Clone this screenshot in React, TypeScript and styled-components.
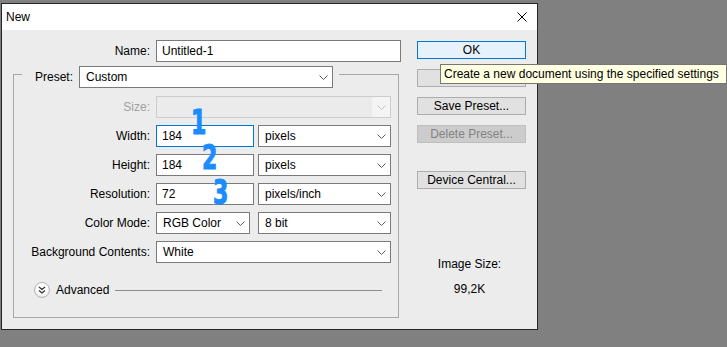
import React from 'react';
import styled, { createGlobalStyle, css } from 'styled-components';

const GlobalStyle = createGlobalStyle`
  html, body {
    margin: 0;
    padding: 0;
    background: #808080;
  }
  body {
    font-family: "Liberation Sans", Arial, sans-serif;
    font-size: 12px;
    color: #000;
  }
`;

const Page = styled.div`
  min-height: 347px;
  padding: 3px 0 0 1px;
  box-sizing: border-box;
  position: relative;
`;

const Dialog = styled.div`
  position: relative;
  width: 537px;
  height: 327px;
  box-sizing: border-box;
  border: 1px solid #262626;
  background: #ececec;
  display: flex;
  flex-direction: column;
`;

const TitleBar = styled.div`
  height: 26px;
  background: #fff;
  display: flex;
  align-items: center;
  justify-content: space-between;
  padding: 0 10px 0 4px;
`;

const Title = styled.span`
  font-size: 12px;
`;

const Body = styled.div`
  flex: 1;
  display: flex;
`;

const LeftCol = styled.div`
  width: 397px;
  padding-top: 10px;
  display: flex;
  flex-direction: column;
`;

const NameRow = styled.div`
  display: grid;
  grid-template-columns: 148px 245px;
  column-gap: 6px;
  align-items: center;
`;

const Label = styled.span<{ $disabled?: boolean }>`
  text-align: right;
  white-space: nowrap;
  color: ${p => (p.$disabled ? '#a0a0a0' : '#000')};
`;

const TextInput = styled.div<{ $w?: number; $focused?: boolean }>`
  width: ${p => (p.$w ? `${p.$w}px` : 'auto')};
  height: 22px;
  box-sizing: border-box;
  background: #fff;
  border: 1px solid ${p => (p.$focused ? '#0078d7' : '#7a7a7a')};
  padding-left: 5px;
  display: flex;
  align-items: center;
`;

const GroupBox = styled.div`
  margin: 12px 0 0 11px;
  width: 386px;
  height: 244px;
  box-sizing: border-box;
  border: 1px solid #a7a7a7;
  display: flex;
  flex-direction: column;
`;

const GroupHeader = styled.div`
  margin: -9px 0 0 8px;
  align-self: flex-start;
  display: flex;
  align-items: center;
  gap: 6px;
  padding: 0 6px 0 13px;
  background: #ececec;
`;

const Rows = styled.div`
  margin-top: 8px;
  display: flex;
  flex-direction: column;
  gap: 7px;
`;

const Row = styled.div`
  display: flex;
  align-items: center;
`;

const RowLabel = styled(Label)`
  width: 136px;
  margin-right: 6px;
`;

const SelectBox = styled.div<{ $w: number; $disabled?: boolean; $ml?: number }>`
  width: ${p => p.$w}px;
  height: 22px;
  margin-left: ${p => p.$ml ?? 0}px;
  box-sizing: border-box;
  border: 1px solid #7a7a7a;
  background: #fff;
  display: flex;
  align-items: center;
  justify-content: space-between;
  padding: 0 0 0 6px;
  ${p =>
    p.$disabled &&
    css`
      border-color: #cdcdcd;
      background: linear-gradient(to right, #ebebeb calc(100% - 18px), #f4f4f4 calc(100% - 18px));
    `}
`;

const ChevronWrap = styled.span`
  width: 18px;
  display: flex;
  justify-content: center;
`;

const Chevron = ({ disabled }: { disabled?: boolean }) => (
  <ChevronWrap>
    <svg width="9" height="5" viewBox="0 0 9 5">
      <path d="M0.5 0.5 L4.5 4.5 L8.5 0.5" fill="none" stroke={disabled ? '#c2c2c2' : '#5a5a5a'} strokeWidth="1" />
    </svg>
  </ChevronWrap>
);

const Select = ({ w, value, disabled, ml }: { w: number; value?: string; disabled?: boolean; ml?: number }) => (
  <SelectBox $w={w} $disabled={disabled} $ml={ml}>
    <span>{value}</span>
    <Chevron disabled={disabled} />
  </SelectBox>
);

const AdvancedRow = styled.div`
  margin-top: 19px;
  display: flex;
  align-items: center;
  padding: 0 16px 0 20px;
`;

const RoundButton = styled.span`
  width: 16px;
  height: 16px;
  box-sizing: border-box;
  border-radius: 50%;
  border: 1px solid #b3b3b3;
  background: radial-gradient(circle at 50% 35%, #ffffff 40%, #dedede 100%);
  display: flex;
  align-items: center;
  justify-content: center;
`;

const AdvancedText = styled.span`
  margin-left: 6px;
`;

const Rule = styled.span`
  flex: 1;
  height: 1px;
  background: #8c8c8c;
  margin-left: 6px;
`;

const RightCol = styled.div`
  padding: 11px 0 0 18px;
  width: 109px;
  display: flex;
  flex-direction: column;
`;

const Buttons = styled.div`
  display: flex;
  flex-direction: column;
  gap: 10px;
`;

const Button = styled.div<{ $primary?: boolean; $disabled?: boolean; $mt?: number }>`
  height: 18px;
  box-sizing: border-box;
  margin-top: ${p => p.$mt ?? 0}px;
  border: 1px solid #adadad;
  background: #e1e1e1;
  display: flex;
  align-items: center;
  justify-content: center;
  ${p =>
    p.$primary &&
    css`
      border-color: #0078d7;
      background: #e5f1fb;
    `}
  ${p =>
    p.$disabled &&
    css`
      border-color: #bfbfbf;
      background: #cccccc;
      color: #838383;
    `}
`;

const SizeInfo = styled.div`
  margin-top: 68px;
  display: flex;
  flex-direction: column;
  align-items: center;
  gap: 11px;
  line-height: 14px;
  padding-right: 4px;
`;

const Tooltip = styled.div`
  position: absolute;
  left: 440px;
  top: 64px;
  width: 287px;
  height: 20px;
  box-sizing: border-box;
  border: 1px solid #767676;
  background: #ffffe1;
  padding-left: 3px;
  display: flex;
  align-items: center;
  white-space: nowrap;
`;

const Marker = styled.span<{ $x: number; $y: number }>`
  position: absolute;
  left: ${p => p.$x}px;
  top: ${p => p.$y}px;
  font-family: "DejaVu Sans Condensed", "DejaVu Sans", sans-serif;
  font-weight: bold;
  font-size: 34px;
  line-height: 1;
  color: #1a8cff;
  -webkit-text-stroke: 1px #1a8cff;
  transform: scaleX(0.72);
  transform-origin: left top;
`;

export default function App() {
  return (
    <>
      <GlobalStyle />
      <Page>
        <Dialog>
          <TitleBar>
            <Title>New</Title>
            <svg width="10" height="10" viewBox="0 0 10 10">
              <path d="M0.5 0.5 L9.5 9.5 M9.5 0.5 L0.5 9.5" stroke="#000" strokeWidth="1" />
            </svg>
          </TitleBar>
          <Body>
            <LeftCol>
              <NameRow>
                <Label>Name:</Label>
                <TextInput>Untitled-1</TextInput>
              </NameRow>
              <GroupBox>
                <GroupHeader>
                  <span>Preset:</span>
                  <Select w={254} value="Custom" />
                </GroupHeader>
                <Rows>
                  <Row>
                    <RowLabel $disabled>Size:</RowLabel>
                    <Select w={235} disabled />
                  </Row>
                  <Row>
                    <RowLabel>Width:</RowLabel>
                    <TextInput $w={98} $focused>184</TextInput>
                    <Select w={133} value="pixels" ml={4} />
                  </Row>
                  <Row>
                    <RowLabel>Height:</RowLabel>
                    <TextInput $w={98}>184</TextInput>
                    <Select w={133} value="pixels" ml={4} />
                  </Row>
                  <Row>
                    <RowLabel>Resolution:</RowLabel>
                    <TextInput $w={98}>72</TextInput>
                    <Select w={133} value="pixels/inch" ml={4} />
                  </Row>
                  <Row>
                    <RowLabel>Color Mode:</RowLabel>
                    <Select w={94} value="RGB Color" />
                    <Select w={133} value="8 bit" ml={8} />
                  </Row>
                  <Row>
                    <RowLabel>Background Contents:</RowLabel>
                    <Select w={235} value="White" />
                  </Row>
                </Rows>
                <AdvancedRow>
                  <RoundButton>
                    <svg width="8" height="8" viewBox="0 0 8 8">
                      <path d="M1 1 L4 3.5 L7 1 M1 4.5 L4 7 L7 4.5" fill="none" stroke="#333" strokeWidth="1.3" />
                    </svg>
                  </RoundButton>
                  <AdvancedText>Advanced</AdvancedText>
                  <Rule />
                </AdvancedRow>
              </GroupBox>
            </LeftCol>
            <RightCol>
              <Buttons>
                <Button $primary>OK</Button>
                <Button>Cancel</Button>
                <Button>Save Preset...</Button>
                <Button $disabled>Delete Preset...</Button>
                <Button $mt={18}>Device Central...</Button>
              </Buttons>
              <SizeInfo>
                <span>Image Size:</span>
                <span>99,2K</span>
              </SizeInfo>
            </RightCol>
          </Body>
          <Marker $x={189} $y={101}>1</Marker>
          <Marker $x={200} $y={136}>2</Marker>
          <Marker $x={211} $y={171}>3</Marker>
        </Dialog>
        <Tooltip>Create a new document using the specified settings</Tooltip>
      </Page>
    </>
  );
}
